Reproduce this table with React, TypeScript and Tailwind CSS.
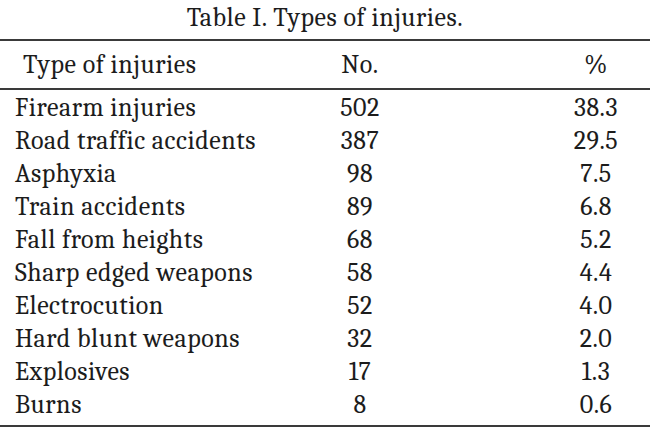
const rows: [string, string, string][] = [
  ["Firearm injuries", "502", "38.3"],
  ["Road traffic accidents", "387", "29.5"],
  ["Asphyxia", "98", "7.5"],
  ["Train accidents", "89", "6.8"],
  ["Fall from heights", "68", "5.2"],
  ["Sharp edged weapons", "58", "4.4"],
  ["Electrocution", "52", "4.0"],
  ["Hard blunt weapons", "32", "2.0"],
  ["Explosives", "17", "1.3"],
  ["Burns", "8", "0.6"],
];

export default function App() {
  return (
    <div className="h-[444px] w-[650px] overflow-hidden bg-white text-[#1c1c1c]">
      <div className="h-[39px] pt-[5px] text-center font-serif text-[26px] leading-[27px] tracking-[0.02em]">
        Table I. Types of injuries.
      </div>
      <div className="border-y-2 border-[#3a3a3a]">
        <div className="grid grid-cols-[300px_120px_1fr] border-b-2 border-[#3a3a3a] pt-[8px] pb-[6px] font-serif text-[26px] leading-[33px] tracking-[0.02em]">
          <div className="pl-[23px] font-serif">Type of injuries</div>
          <div className="text-center font-serif">No.</div>
          <div className="pl-[122px] text-center font-serif">%</div>
        </div>
        <div className="pt-[2px] pb-[3px]">
          {rows.map(([type, no, pct]) => (
            <div key={type} className="grid grid-cols-[300px_120px_1fr] font-serif text-[26px] leading-[33px] tracking-[0.02em]">
              <div className="pl-[15px] font-serif">{type}</div>
              <div className="text-center font-serif">{no}</div>
              <div className="pl-[122px] text-center font-serif">{pct}</div>
            </div>
          ))}
        </div>
      </div>
    </div>
  );
}
